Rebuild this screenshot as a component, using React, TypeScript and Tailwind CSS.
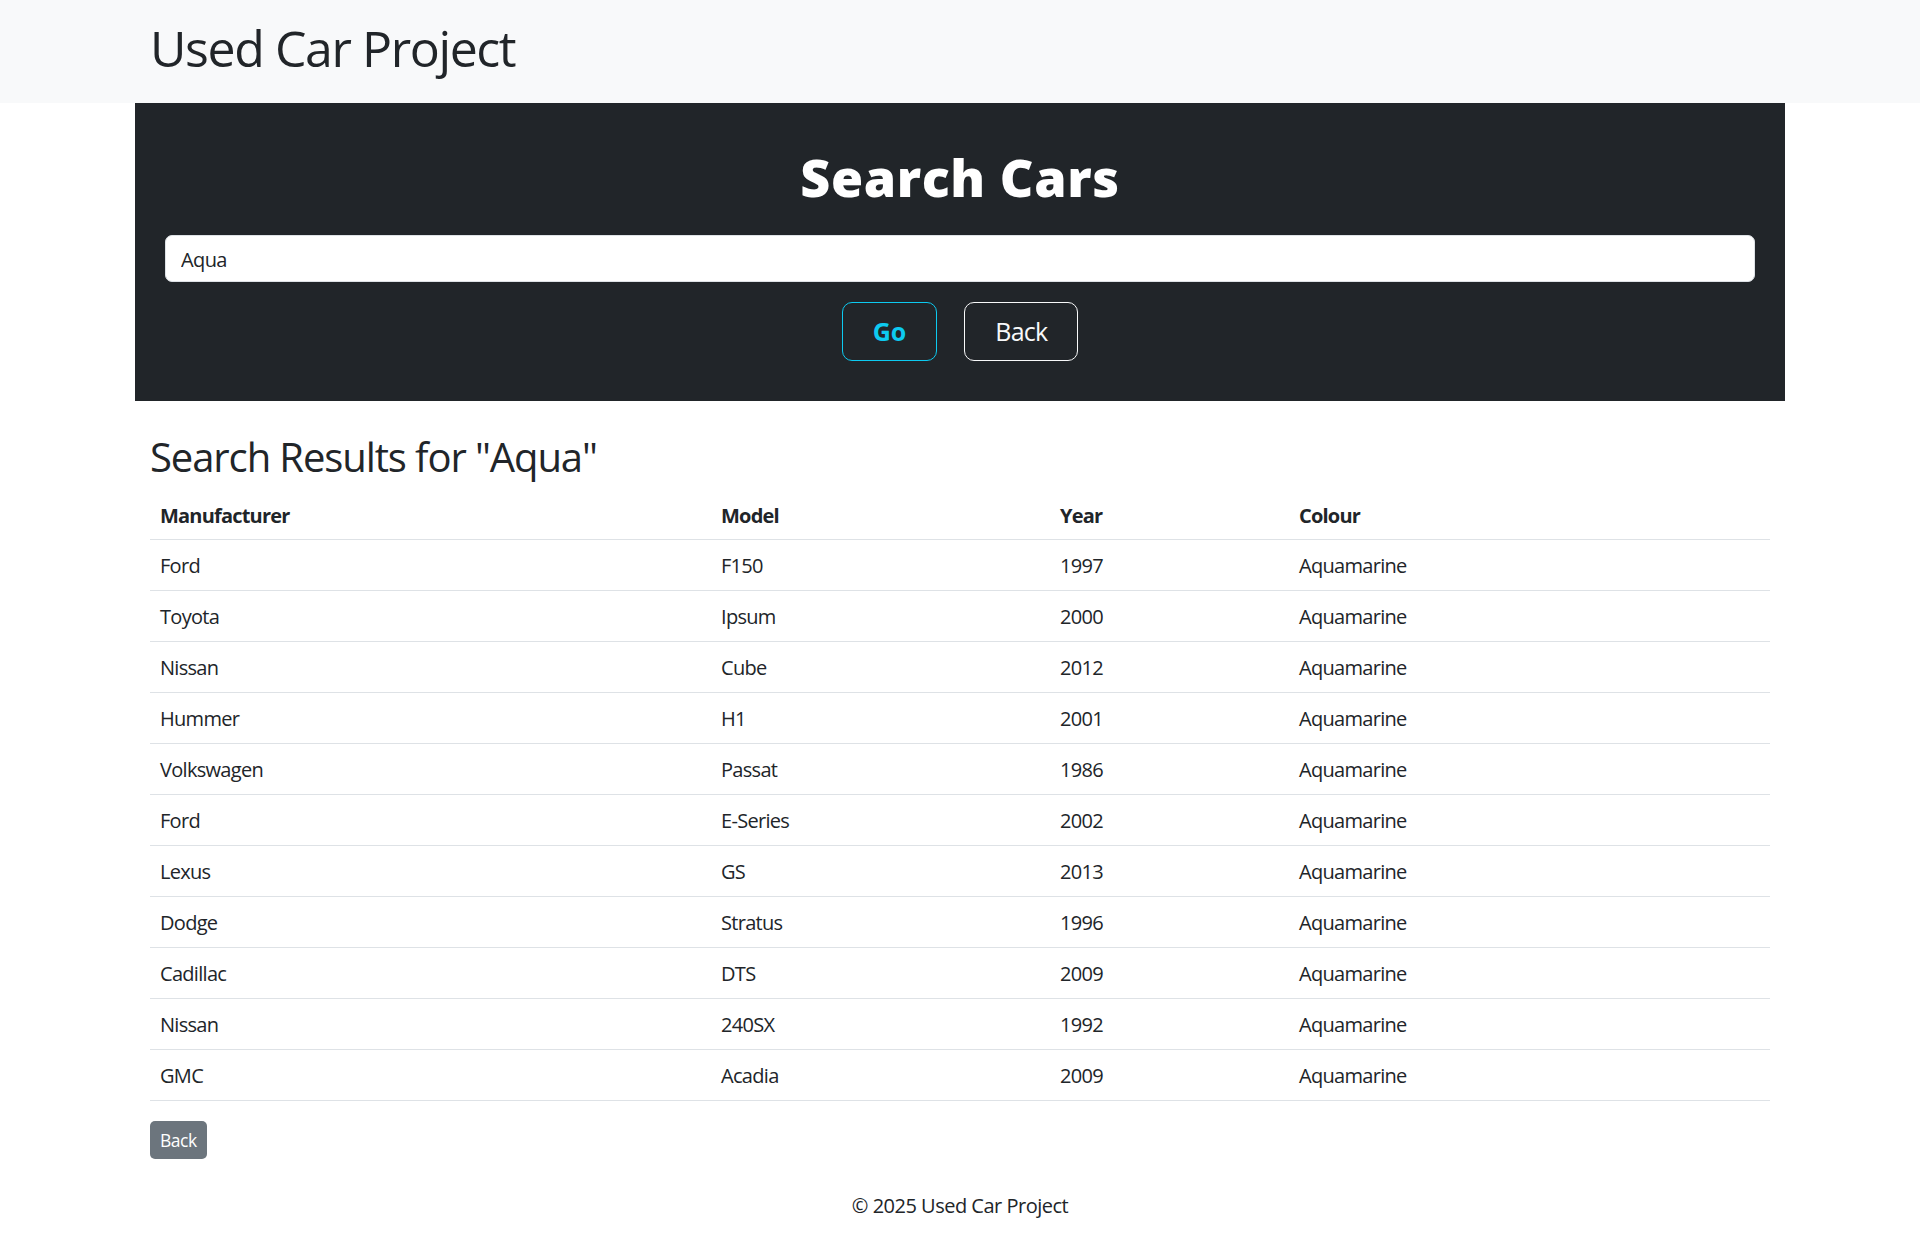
const cars = [
  { make: "Ford", model: "F150", year: 1997, colour: "Aquamarine" },
  { make: "Toyota", model: "Ipsum", year: 2000, colour: "Aquamarine" },
  { make: "Nissan", model: "Cube", year: 2012, colour: "Aquamarine" },
  { make: "Hummer", model: "H1", year: 2001, colour: "Aquamarine" },
  { make: "Volkswagen", model: "Passat", year: 1986, colour: "Aquamarine" },
  { make: "Ford", model: "E-Series", year: 2002, colour: "Aquamarine" },
  { make: "Lexus", model: "GS", year: 2013, colour: "Aquamarine" },
  { make: "Dodge", model: "Stratus", year: 1996, colour: "Aquamarine" },
  { make: "Cadillac", model: "DTS", year: 2009, colour: "Aquamarine" },
  { make: "Nissan", model: "240SX", year: 1992, colour: "Aquamarine" },
  { make: "GMC", model: "Acadia", year: 2009, colour: "Aquamarine" },
];

export default function App() {
  const query = "Aqua";

  return (
    <div className="min-h-screen bg-white text-[#212529] font-['Open_Sans',sans-serif]">
      <header className="h-[103px] bg-[#f8f9fa]">
        <div className="mx-auto w-[1650px] px-[15px] pt-[18px]">
          <h1 className="text-[50px] leading-[60px] font-normal tracking-[-1.4px]">Used Car Project</h1>
        </div>
      </header>

      <main className="mx-auto w-[1650px]">
        <section className="bg-[#212529] px-[30px] pt-[44px] pb-[40px] text-center">
          <h1 className="mb-[28px] text-[52px] leading-[60px] font-extrabold tracking-[0.6px] text-white">Search Cars</h1>
          <input
            type="text"
            defaultValue={query}
            className="block h-[47px] w-full rounded-[7px] border border-[#dee2e6] bg-white px-[15px] pt-[2px] text-[20px] tracking-[-0.6px] text-[#212529] outline-none"
          />
          <div className="mt-[20px] flex justify-center gap-[27px]">
            <button className="h-[59px] rounded-[10px] border border-[#0dcaf0] px-[30px] text-[25px] font-bold text-[#0dcaf0]">
              Go
            </button>
            <button className="h-[59px] rounded-[10px] border border-[#f8f9fa] px-[30px] text-[25px] tracking-[-0.8px] text-[#f8f9fa]">
              Back
            </button>
          </div>
        </section>

        <div className="px-[15px]">
          <h2 className="mt-[32px] mb-[8px] text-[40px] leading-[48px] font-normal tracking-[-1.1px]">
            Search Results for "{query}"
          </h2>
          <table className="w-full border-collapse text-[20px] leading-[30px] tracking-[-0.7px]">
            <thead>
              <tr className="border-b border-[#dee2e6]">
                <th className="w-[561px] px-[10px] pt-[12px] pb-[8px] text-left font-bold tracking-[-0.8px]">Manufacturer</th>
                <th className="w-[339px] px-[10px] pt-[12px] pb-[8px] text-left font-bold tracking-[-0.8px]">Model</th>
                <th className="w-[239px] px-[10px] pt-[12px] pb-[8px] text-left font-bold tracking-[-0.8px]">Year</th>
                <th className="px-[10px] pt-[12px] pb-[8px] text-left font-bold tracking-[-0.8px]">Colour</th>
              </tr>
            </thead>
            <tbody>
              {cars.map((c, i) => (
                <tr key={i} className="border-b border-[#dee2e6]">
                  <td className="px-[10px] pt-[11px] pb-[9px]">{c.make}</td>
                  <td className="px-[10px] pt-[11px] pb-[9px]">{c.model}</td>
                  <td className="px-[10px] pt-[11px] pb-[9px]">{c.year}</td>
                  <td className="px-[10px] pt-[11px] pb-[9px]">{c.colour}</td>
                </tr>
              ))}
            </tbody>
          </table>
          <button className="mt-[20px] h-[38px] rounded-[5px] bg-[#6c757d] px-[10px] text-[17.5px] tracking-[-0.5px] text-white">
            Back
          </button>
        </div>
      </main>

      <footer className="mt-[32px] pb-[20px] text-center text-[20px] leading-[30px] tracking-[-0.5px]">
        © 2025 Used Car Project
      </footer>
    </div>
  );
}
